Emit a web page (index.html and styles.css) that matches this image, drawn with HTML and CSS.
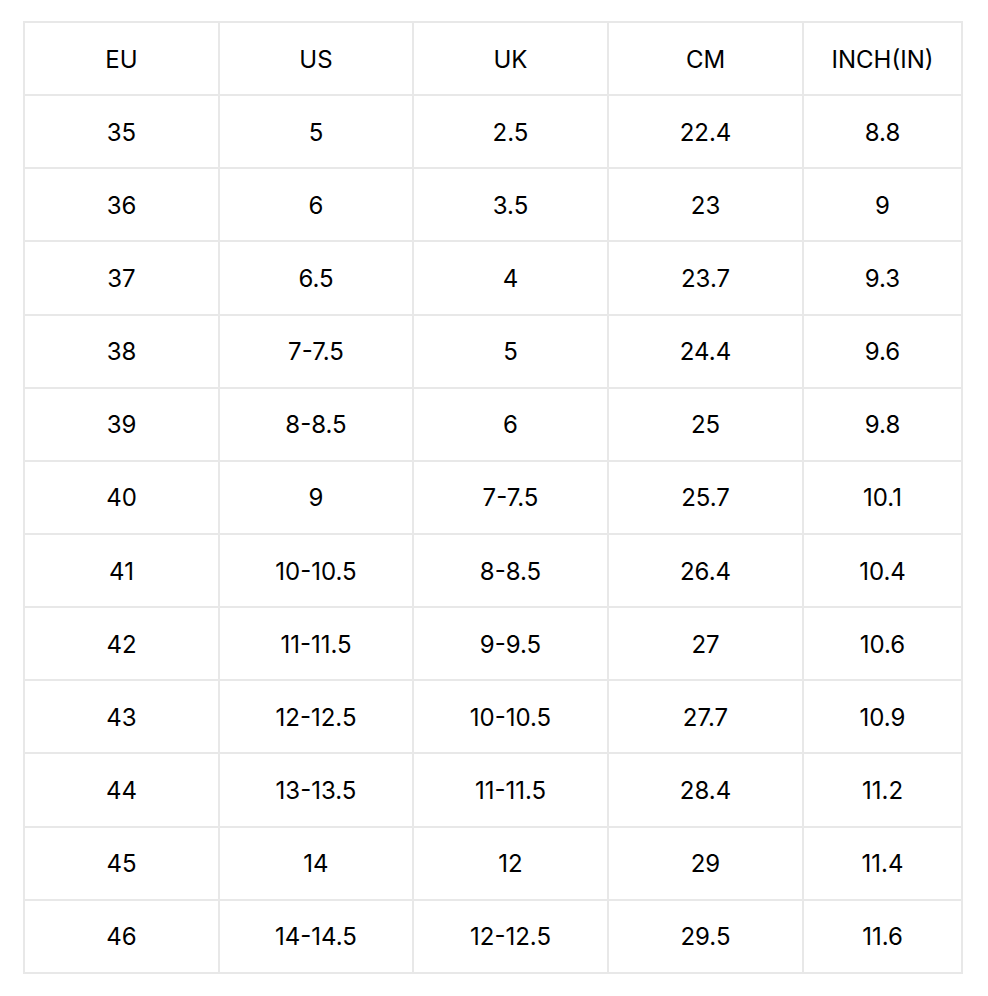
FILE: index.html
```html
<!DOCTYPE html>
<html lang="en">
<head>
<meta charset="utf-8">
<title>Size chart</title>
<link rel="stylesheet" href="styles.css">
</head>
<body>
<table class="size-table">
  <colgroup>
    <col class="c1"><col class="c2"><col class="c3"><col class="c4"><col class="c5">
  </colgroup>
  <thead>
    <tr><th>EU</th><th>US</th><th>UK</th><th>CM</th><th>INCH(IN)</th></tr>
  </thead>
  <tbody>
    <tr><td>35</td><td>5</td><td>2.5</td><td>22.4</td><td>8.8</td></tr>
    <tr><td>36</td><td>6</td><td>3.5</td><td>23</td><td>9</td></tr>
    <tr><td>37</td><td>6.5</td><td>4</td><td>23.7</td><td>9.3</td></tr>
    <tr><td>38</td><td>7-7.5</td><td>5</td><td>24.4</td><td>9.6</td></tr>
    <tr><td>39</td><td>8-8.5</td><td>6</td><td>25</td><td>9.8</td></tr>
    <tr><td>40</td><td>9</td><td>7-7.5</td><td>25.7</td><td>10.1</td></tr>
    <tr><td>41</td><td>10-10.5</td><td>8-8.5</td><td>26.4</td><td>10.4</td></tr>
    <tr><td>42</td><td>11-11.5</td><td>9-9.5</td><td>27</td><td>10.6</td></tr>
    <tr><td>43</td><td>12-12.5</td><td>10-10.5</td><td>27.7</td><td>10.9</td></tr>
    <tr><td>44</td><td>13-13.5</td><td>11-11.5</td><td>28.4</td><td>11.2</td></tr>
    <tr><td>45</td><td>14</td><td>12</td><td>29</td><td>11.4</td></tr>
    <tr><td>46</td><td>14-14.5</td><td>12-12.5</td><td>29.5</td><td>11.6</td></tr>
  </tbody>
</table>
</body>
</html>
```

FILE: styles.css
```css
html, body {
  margin: 0;
  padding: 0;
  background: #ffffff;
}

body {
  padding: 21px 0 0 23px;
  font-family: "Inter", "Liberation Sans", sans-serif;
  color: #000000;
}

.size-table {
  width: 938px;
  table-layout: fixed;
  border-collapse: collapse;
  border: 2px solid #e8e8e8;
}

.c1 { width: 195px; }
.c2 { width: 194px; }
.c3 { width: 195px; }
.c4 { width: 195px; }
.c5 { width: 159px; }

.size-table th,
.size-table td {
  border: 2px solid #e8e8e8;
  height: 69.15px;
  padding: 2px 0 0;
  text-align: center;
  vertical-align: middle;
  font-size: 24px;
  font-weight: 400;
  line-height: 1;
}
```
